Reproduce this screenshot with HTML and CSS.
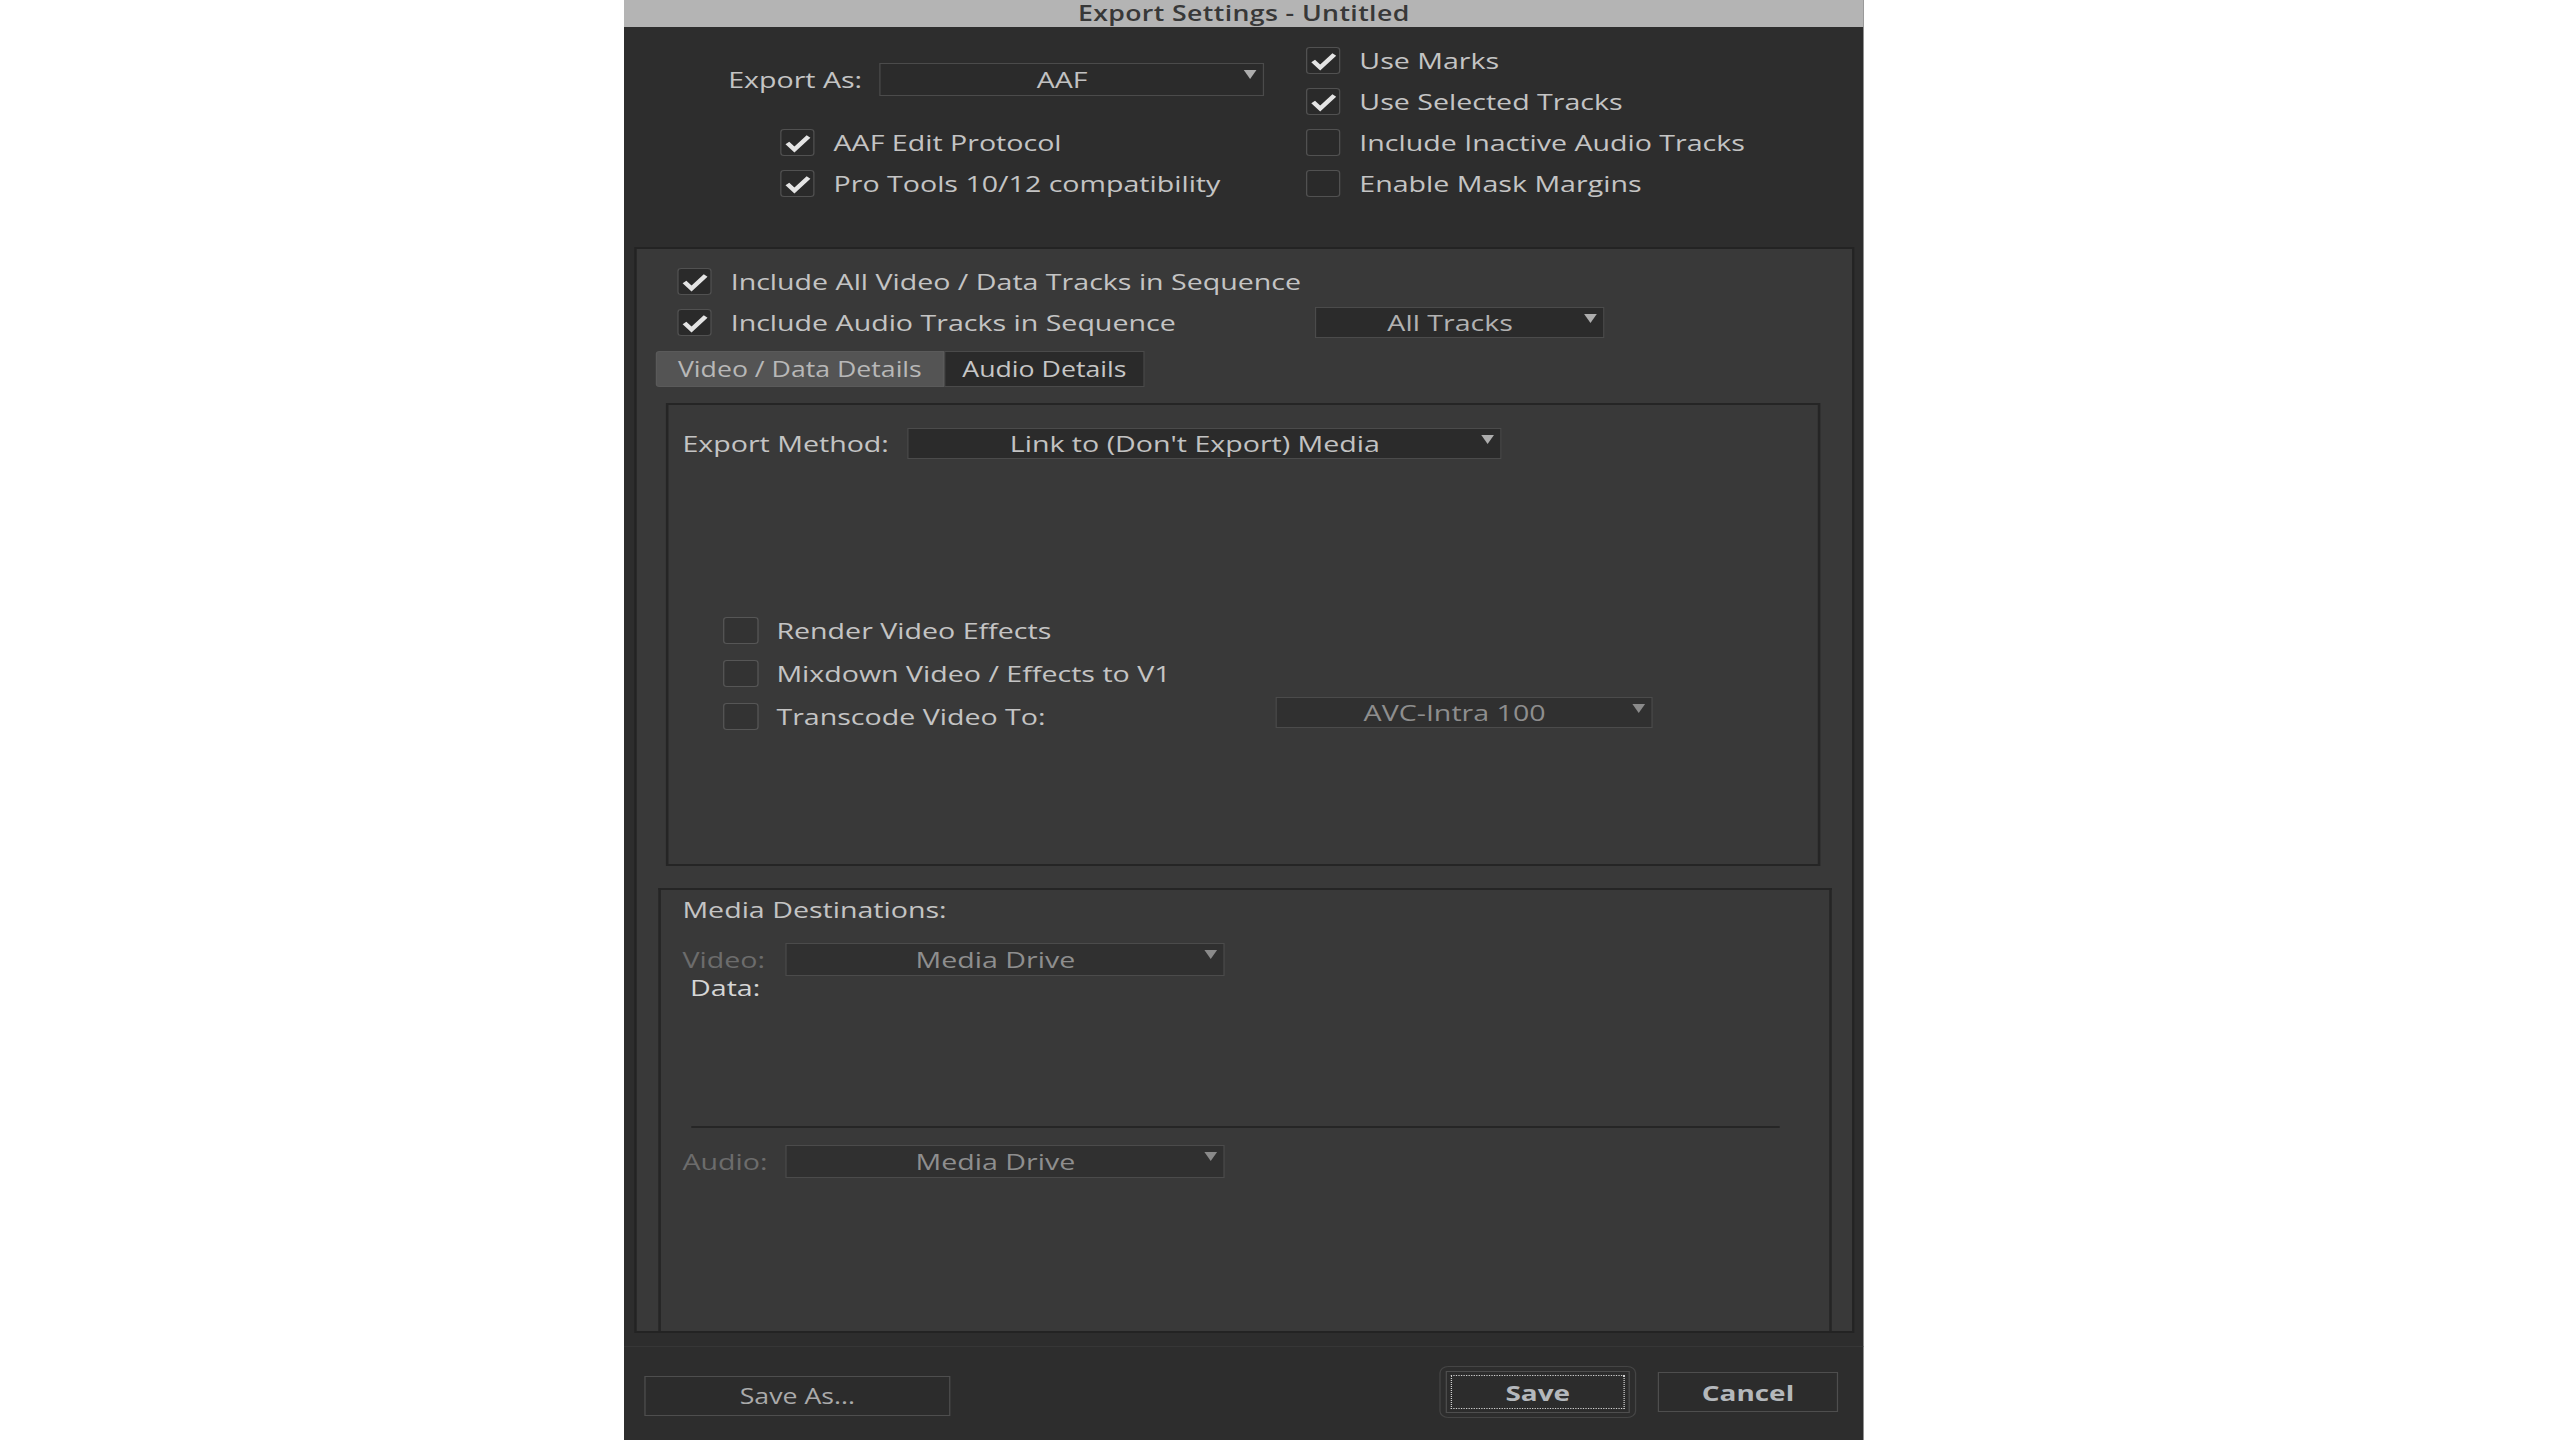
FILE: index.html
```html
<!DOCTYPE html>
<html lang="en">
<head>
    <meta charset="UTF-8">
    <title>Export Settings - Untitled</title>
    <link rel="stylesheet" href="styles.css">
</head>
<body>
    <div class="dialog">
        <div class="titlebar">Export Settings - Untitled</div>

        <div class="top">
            <div class="top-left">
                <div class="export-as">
                    <span class="export-label">Export As:</span>
                    <div class="select select-export"><span class="select-text">AAF</span><span class="arrow"></span></div>
                </div>
                <div class="check check-left">
                    <span class="box checked"><svg viewBox="0 0 27 27"><path d="M5 14 L11 21 L23 7"/></svg></span>
                    <span>AAF Edit Protocol</span>
                </div>
                <div class="check check-left">
                    <span class="box checked"><svg viewBox="0 0 27 27"><path d="M5 14 L11 21 L23 7"/></svg></span>
                    <span>Pro Tools 10/12 compatibility</span>
                </div>
            </div>
            <div class="top-right">
                <div class="check">
                    <span class="box checked"><svg viewBox="0 0 27 27"><path d="M5 14 L11 21 L23 7"/></svg></span>
                    <span>Use Marks</span>
                </div>
                <div class="check">
                    <span class="box checked"><svg viewBox="0 0 27 27"><path d="M5 14 L11 21 L23 7"/></svg></span>
                    <span>Use Selected Tracks</span>
                </div>
                <div class="check">
                    <span class="box"></span>
                    <span>Include Inactive Audio Tracks</span>
                </div>
                <div class="check">
                    <span class="box"></span>
                    <span>Enable Mask Margins</span>
                </div>
            </div>
        </div>

        <div class="panel">
            <div class="check panel-row">
                <span class="box checked"><svg viewBox="0 0 27 27"><path d="M5 14 L11 21 L23 7"/></svg></span>
                <span>Include All Video / Data Tracks in Sequence</span>
            </div>
            <div class="panel-row tracks-row">
                <div class="check tracks-check">
                    <span class="box checked"><svg viewBox="0 0 27 27"><path d="M5 14 L11 21 L23 7"/></svg></span>
                    <span>Include Audio Tracks in Sequence</span>
                </div>
                <div class="select select-tracks"><span class="select-text">All Tracks</span><span class="arrow"></span></div>
            </div>

            <div class="tabs">
                <div class="tab tab-active">Video / Data Details</div>
                <div class="tab">Audio Details</div>
            </div>

            <div class="video-box">
                <div class="method-row">
                    <span class="method-label">Export Method:</span>
                    <div class="select select-method"><span class="select-text">Link to (Don't Export) Media</span><span class="arrow"></span></div>
                </div>
                <div class="video-checks">
                    <div class="check video-check">
                        <span class="box"></span>
                        <span>Render Video Effects</span>
                    </div>
                    <div class="check video-check">
                        <span class="box"></span>
                        <span>Mixdown Video / Effects to V1</span>
                    </div>
                    <div class="transcode-row">
                        <div class="check video-check transcode-check">
                            <span class="box"></span>
                            <span>Transcode Video To:</span>
                        </div>
                        <div class="select select-avc disabled"><span class="select-text">AVC-Intra 100</span><span class="arrow"></span></div>
                    </div>
                </div>
            </div>

            <div class="media-box">
                <div class="media-title">Media Destinations:</div>
                <div class="dest-row">
                    <span class="dest-label">Video:</span>
                    <div class="select select-dest disabled"><span class="select-text">Media Drive</span><span class="arrow"></span></div>
                </div>
                <div class="data-label">Data:</div>
                <div class="media-sep"></div>
                <div class="dest-row audio-row">
                    <span class="dest-label">Audio:</span>
                    <div class="select select-dest disabled"><span class="select-text">Media Drive</span><span class="arrow"></span></div>
                </div>
            </div>
        </div>

        <div class="footer">
            <button class="btn btn-saveas">Save As...</button>
            <div class="default-ring">
                <button class="btn btn-save"><span class="focus">Save</span></button>
            </div>
            <button class="btn btn-cancel">Cancel</button>
        </div>
    </div>
</body>
</html>
```

FILE: styles.css
```css
body {
    margin: 0;
    background: #ffffff;
    font-family: "Open Sans", "DejaVu Sans", sans-serif;
    font-size: 22.5px;
    color: #c4c4c4;
}
/* the capture is stretched sideways, so the dialog is laid out narrow and widened */
.dialog {
    width: 976px;
    height: 1440px;
    margin-left: 624px;
    background: #2d2d2d;
    transform: scaleX(1.27);
    transform-origin: 0 0;
    overflow: hidden;
    box-sizing: border-box;
}
.titlebar {
    height: 27px;
    line-height: 26px;
    background: #b4b4b4;
    color: #383838;
    font-size: 21px;
    font-weight: 600;
    letter-spacing: 0.3px;
    text-align: center;
}

/* checkboxes */
.check {
    display: flex;
    align-items: center;
    gap: 15px;
    height: 41px;
    white-space: nowrap;
}
.box {
    flex: 0 0 auto;
    width: 27px;
    height: 27px;
    box-sizing: border-box;
    border: 1px solid #515151;
    border-radius: 3px;
    background: #2a2a2a;
}
.box svg {
    display: block;
    width: 25px;
    height: 25px;
}
.box path {
    fill: none;
    stroke: #e4e4e4;
    stroke-width: 4.2;
    stroke-linejoin: miter;
}

/* dropdowns */
.select {
    display: flex;
    align-items: flex-start;
    box-sizing: border-box;
    border: 1px solid #4b4b4b;
    background: #2b2b2b;
    color: #c2c2c2;
    padding-right: 5px;
}
.select-text {
    flex: 1;
    text-align: center;
    align-self: center;
    white-space: nowrap;
}
.arrow {
    width: 0;
    height: 0;
    margin-top: 6px;
    border-left: 5.5px solid transparent;
    border-right: 5.5px solid transparent;
    border-top: 9px solid #adadad;
}
.select.disabled {
    background: #303030;
    color: #8e8e8e;
}
.select.disabled .arrow {
    border-top-color: #8a8a8a;
}

/* top area */
.top {
    display: flex;
    height: 220px;
    padding-top: 13px;
    box-sizing: border-box;
}
.top-left {
    width: 537px;
}
.export-as {
    display: flex;
    align-items: center;
    height: 82px;
    padding-left: 82px;
    padding-bottom: 4px;
    box-sizing: border-box;
}
.export-label {
    width: 119px;
}
.select-export {
    width: 303px;
    height: 33px;
}
.check-left {
    padding-left: 123px;
}

/* main panel */
.panel {
    margin-left: 8px;
    width: 961px;
    height: 1086px;
    box-sizing: border-box;
    border: 2px solid #232323;
    background: #393939;
    padding-top: 12px;
    overflow: hidden;
}
.panel-row {
    padding-left: 32px;
}
.tracks-row {
    display: flex;
    align-items: center;
    height: 41px;
}
.tracks-check {
    width: 502px;
}
.select-tracks {
    width: 228px;
    height: 31px;
    color: #b2b2b2;
}
.tabs {
    display: flex;
    margin: 8px 0 0 15px;
    height: 36px;
}
.tab {
    box-sizing: border-box;
    line-height: 34px;
    font-size: 21px;
    text-align: center;
    border: 1px solid #4a4a4a;
    background: #2a2a2a;
    color: #c6c6c6;
    width: 158px;
}
.tab-active {
    width: 227px;
    background: #545454;
    border-color: #5a5a5a;
    color: #b8b8b8;
    border-radius: 3px 0 0 3px;
}
.video-box {
    margin: 16px 0 0 23px;
    width: 909px;
    height: 463px;
    box-sizing: border-box;
    border: 2px solid #252525;
    padding: 23px 0 0 11px;
}
.method-row {
    display: flex;
    align-items: center;
    height: 31px;
}
.method-label {
    width: 177px;
}
.select-method {
    width: 468px;
    height: 31px;
}
.video-checks {
    margin-top: 150px;
    padding-left: 32px;
}
.video-check {
    height: 43px;
    gap: 14px;
}
.video-check .box {
    width: 28px;
    background: #333333;
    border-color: #565656;
}
.transcode-row {
    display: flex;
    align-items: center;
}
.transcode-check {
    width: 435px;
}
.select-avc {
    width: 297px;
    height: 31px;
    margin-bottom: 8px;
}
.media-box {
    margin: 22px 0 0 17px;
    width: 924px;
    height: 520px;
    box-sizing: border-box;
    border: 2px solid #252525;
    border-bottom: none;
    padding: 5px 0 0 17px;
}
.media-title {
    height: 30px;
    line-height: 30px;
}
.dest-row {
    display: flex;
    align-items: center;
    margin-top: 18px;
    height: 33px;
}
.dest-label {
    width: 81px;
    color: #6c6c6c;
}
.select-dest {
    width: 346px;
    height: 33px;
    color: #9a9a9a;
}
.data-label {
    height: 24px;
    line-height: 24px;
    padding-left: 6px;
    color: #d6d6d6;
}
.media-sep {
    margin: 126px 0 0 7px;
    width: 857px;
    height: 2px;
    background: #262626;
}
.audio-row {
    margin-top: 17px;
}

/* buttons */
.footer {
    display: flex;
    align-items: flex-start;
    margin-top: 13px;
    border-top: 1px solid #363636;
    padding: 0 20px 0 16px;
}
.btn {
    font-family: inherit;
    box-sizing: border-box;
    border: 1px solid #4e4e4e;
    background: #2c2c2c;
    color: #aaaaaa;
    font-size: 21px;
    padding: 0;
}
.btn-saveas {
    width: 241px;
    height: 40px;
    margin-top: 29px;
}
.default-ring {
    margin: 19px 0 0 auto;
    width: 155px;
    height: 52px;
    box-sizing: border-box;
    border: 1px solid #454545;
    border-radius: 7px;
    padding: 4px;
}
.btn-save {
    display: block;
    width: 100%;
    height: 100%;
    padding: 3px;
    font-weight: 700;
    font-size: 22px;
    color: #b4b8bc;
}
.focus {
    display: block;
    height: 100%;
    box-sizing: border-box;
    border: 1px dotted #d0d0d0;
    line-height: 32px;
}
.btn-cancel {
    width: 142px;
    height: 40px;
    margin: 25px 0 0 17px;
    font-weight: 700;
    font-size: 22px;
    color: #b4b8bc;
}
```
